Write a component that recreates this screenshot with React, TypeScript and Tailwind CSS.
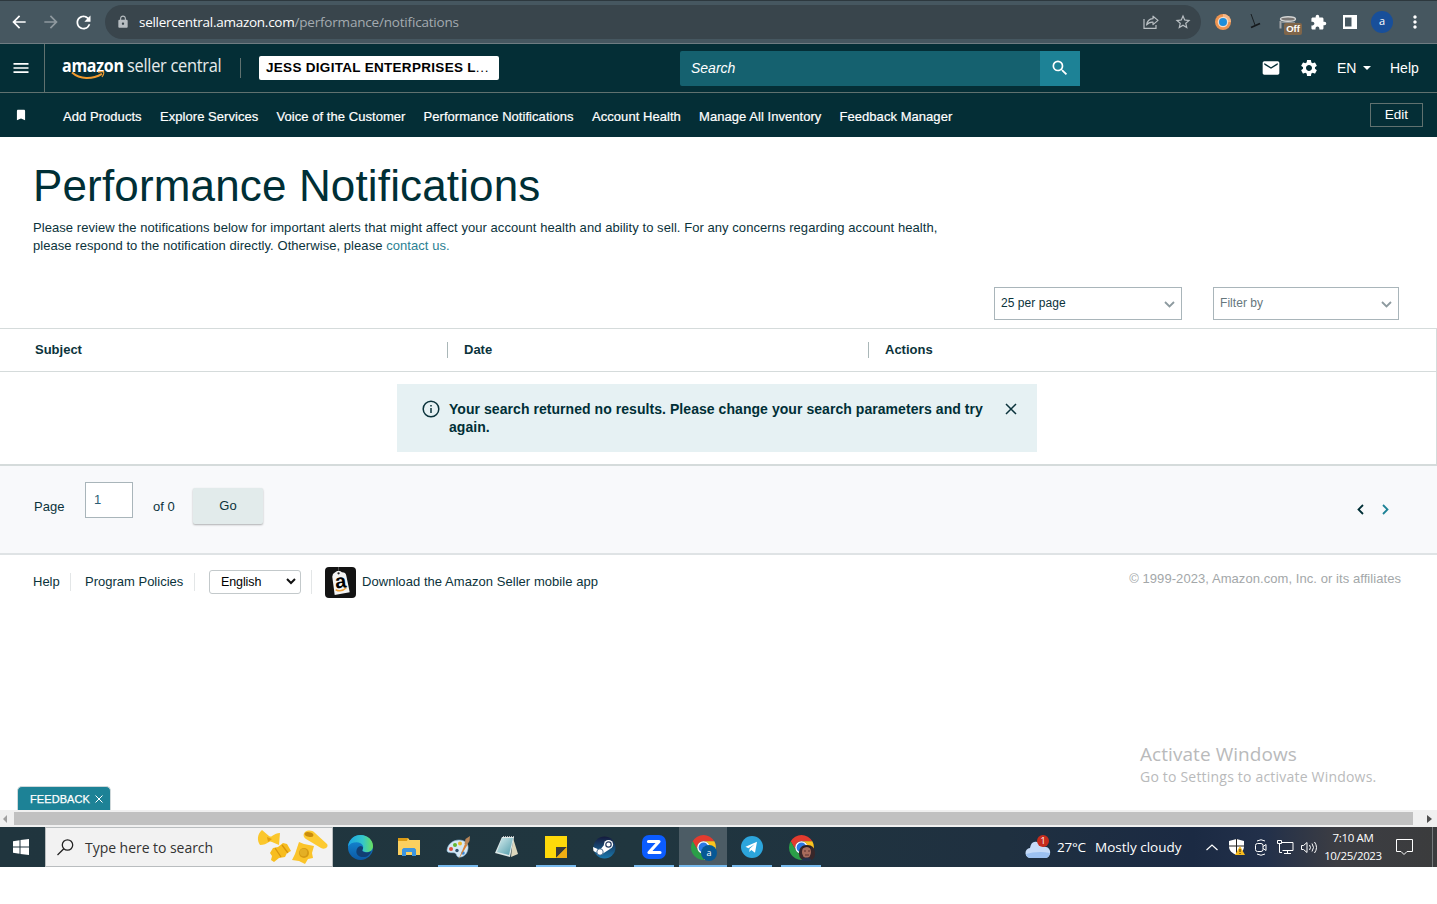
import type { ReactNode } from "react";
import {
  MdArrowBack, MdArrowForward, MdBookmark, MdExtension, MdLock, MdMail, MdMenu,
  MdMoreVert, MdRefresh, MdSearch, MdSettings, MdStarBorder,
} from "react-icons/md";

const ui = "font-['Open_Sans','Noto_Sans',sans-serif]";

function ShareIcon() {
  return (
    <svg width="16" height="16" viewBox="0 0 16 16" fill="none" stroke="#b9bfc3" strokeWidth="1.2">
      <path d="M1 5v9.4h12V11" />
      <path d="M10 2.2 15 6.4l-5 4.2V8.2C7 8 5 9 3.6 11 4 7.6 6 5 10 4.700z" strokeLinejoin="round" />
    </svg>
  );
}

function BrowserBar() {
  return (
    <div className="flex h-[44px] items-center border-b border-[#6f7c82] border-t border-t-[#2d383e] bg-[#465760] text-white">
      <MdArrowBack size={20} className="ml-[9px]" />
      <MdArrowForward size={20} className="ml-[12px] text-[#8f999f]" />
      <MdRefresh size={21} className="ml-[12px]" />
      <div className="ml-[11px] flex h-[34px] w-[1096px] items-center rounded-full bg-[#39454c]">
        <MdLock size={14} className="ml-[11px] text-[#b7bdc1]" />
        <span className={`ml-[9px] whitespace-nowrap text-[13.5px] tracking-[-0.19px] text-[#a4abb0] ${ui}`}>
          <span className="tracking-[-0.27px] text-white">sellercentral.amazon.com</span>/performance/notifications
        </span>
        <div className="ml-auto mr-[9px] flex items-center gap-[15px] text-[#b9bfc3]">
          <ShareIcon />
          <MdStarBorder size={18} />
        </div>
      </div>
      <svg className="ml-[14px]" width="16" height="16" viewBox="0 0 16 16">
        <circle cx="8" cy="8" r="8" fill="#ee9450" />
        <path d="M8 0a8 8 0 0 1 8 8h-8z" fill="#f6b684" />
        <circle cx="8" cy="8" r="5.300" fill="#f3dcc9" />
        <circle cx="8" cy="8" r="4" fill="#1d8edb" />
      </svg>
      <svg className="ml-[19px]" width="12" height="16" viewBox="0 0 12 16" stroke="#15191c">
        <path d="M1 0 5 11" strokeWidth="0.9" />
        <path d="M1 13.500 10 9.500" strokeWidth="1.800" />
      </svg>
      <div className="relative ml-[17px] h-[18px] w-[24px] pt-[3px]">
        <svg width="20" height="18" viewBox="0 0 20 18" fill="none">
          <path d="M1.500 5v7.500" stroke="#a4a7a8" strokeWidth="2" />
          <ellipse cx="9" cy="3" rx="7.500" ry="2.200" fill="#7a7775" stroke="#d5d6d5" strokeWidth="1.400" />
          <path d="M2 6.500h14" stroke="#8c9092" />
        </svg>
        <span className="absolute left-[5px] top-[10px] flex h-[12px] w-[18px] items-center justify-center rounded-[2px] bg-[#80664a] font-['Liberation_Sans',sans-serif] text-[9.5px] font-bold">Off</span>
      </div>
      <MdExtension size={17} className="ml-[7px]" />
      <svg className="ml-[16px]" width="14" height="14"><path d="M0 0h14v14H0zM2 2.500v9h6.500v-9z" fill="#fff" fillRule="evenodd" /></svg>
      <span className={`ml-[14px] flex h-[22px] w-[22px] items-center justify-center rounded-full bg-[#184f9a] pb-px text-[11px] ${ui}`}>a</span>
      <MdMoreVert size={20} className="ml-[12px]" />
    </div>
  );
}

function SellerHeader() {
  return (
    <header className="flex h-[49px] items-center border-b border-[#60716f] bg-[#042e36] text-[14px] text-white">
      <div className="flex h-full w-[45px] items-center border-r border-[#60716f] pl-[11px]">
        <MdMenu size={20} />
      </div>
      <div className={`relative ml-[17px] flex h-[28px] w-[161px] whitespace-nowrap text-[18px] leading-[22px] ${ui}`}>
        <span className="w-[65px]"><span className="inline-block origin-left scale-x-[0.89] font-bold tracking-[-0.3px]">amazon</span></span>
        <span className="inline-block origin-left scale-x-[0.91] tracking-[-0.3px] text-[#e6ebec]">seller central</span>
        <svg className="absolute left-[9px] top-[17px]" width="34" height="10" viewBox="0 0 34 10" fill="none" stroke="#f29a2e">
          <path d="M1 1.500C9 8.500 21 8.800 31 2.800" strokeWidth="2" />
          <path d="M27 1.200c3-.7 5-.5 5.500 0 .4.600-.2 3-1.500 4.800" strokeWidth="1.200" />
        </svg>
      </div>
      <div className="ml-[17px] h-[20px] w-px bg-[#60716f]" />
      <div className="ml-[18px] flex h-[24px] w-[240px] items-center whitespace-nowrap rounded-[2px] bg-white pl-[7px] text-[13.500px] font-bold tracking-[0.3px] text-black">
        JESS DIGITAL ENTERPRISES L<span className="font-normal tracking-[0.7px]">...</span>
      </div>
      <div className="ml-[181px] flex h-[35px] w-[360px] items-center rounded-l-[2px] bg-[#15616f] pl-[11px] italic">Search</div>
      <div className="flex h-[35px] w-[40px] items-center justify-center bg-[#1d8296]"><MdSearch size={20} /></div>
      <MdMail size={20} className="ml-[181px]" />
      <MdSettings size={20} className="ml-[18px]" />
      <span className="ml-[18px] w-[26px]">EN</span>
      <svg width="8" height="4"><path d="M0 0h8L4 4z" fill="#fff" /></svg>
      <span className="ml-[19px]">Help</span>
    </header>
  );
}

const links: [string, string][] = [
  ["Add Products", "w-[97px]"],
  ["Explore Services", "w-[116.500px]"],
  ["Voice of the Customer", "w-[147px]"],
  ["Performance Notifications", "w-[168.500px]"],
  ["Account Health", "w-[107px]"],
  ["Manage All Inventory", "w-[140.500px]"],
  ["Feedback Manager", "w-[120px]"],
];

function ShortcutBar() {
  return (
    <nav className="flex h-[44px] items-center bg-[#042e36] text-[13px] text-white">
      <MdBookmark size={14} className="ml-[14px] mr-[35px]" />
      {links.map(([label, w]) => (
        <span key={label} className={`${w} shrink-0 whitespace-nowrap pt-[3px] tracking-[0.05px] [-webkit-text-stroke:0.2px_white]`}>{label}</span>
      ))}
      <div className="ml-auto mr-[14px] flex h-[24px] w-[53px] items-center justify-center border border-[#60716f] text-[13.500px]">Edit</div>
    </nav>
  );
}

function Dropdown({ children, className }: { children: ReactNode; className: string }) {
  return (
    <div className={`flex h-[33px] items-center justify-between border border-[#a9b5ba] pl-[6px] pr-[6px] text-[12px] ${className}`}>
      <span className="pb-[2px] tracking-[0.05px]">{children}</span>
      <svg className="mt-[2px]" width="11" height="7" fill="none" stroke="#8d9a9f" strokeWidth="1.800"><path d="M1 1l4.500 4.500L10 1" /></svg>
    </div>
  );
}

function Notifications() {
  return (
    <main className="relative h-[673px] bg-white text-[13px] text-[#0b333b]">
      <h1 className="h-[82px] pl-[33px] pt-[22px] text-[44px] leading-[54px] tracking-[0.15px] text-[#002f36]">Performance Notifications</h1>
      <p className="h-[68px] whitespace-nowrap pl-[33px] leading-[18px] tracking-[0.058px]">
        Please review the notifications below for important alerts that might affect your account health and ability to sell. For any concerns regarding account health,
        <br />
        please respond to the notification directly. Otherwise, please <a className="text-[#2b7f93]">contact us.</a>
      </p>
      <div className="flex h-[41px] gap-[31px] pl-[994px]">
        <Dropdown className="w-[188px]">25 per page</Dropdown>
        <Dropdown className="w-[186px] text-[#66777d]">Filter by</Dropdown>
      </div>
      <div className="flex h-[44px] items-center border-y border-r border-[#d5dbdb] text-[13px] font-bold">
        <span className="w-[447px] pl-[35px]">Subject</span>
        <span className="h-[16px] w-[421px] border-l border-[#aab7b8] pl-[16px] leading-[16px]">Date</span>
        <span className="h-[16px] border-l border-[#aab7b8] pl-[16px] leading-[16px]">Actions</span>
      </div>
      <div className="h-[94px] border-b-2 border-r border-[#d5dbdb] pl-[397px] pt-[12px]">
        <div className="flex h-[68px] w-[640px] bg-[#e6f1f3] pl-[25px] pt-[16px]">
          <svg width="18" height="18" viewBox="0 0 18 18" fill="none" stroke="#0b333b" strokeWidth="1.500">
            <circle cx="9" cy="9" r="7.800" /><path d="M9 8v5M9 5v1.600" />
          </svg>
          <p className="ml-[9px] w-[556px] text-[14px] font-bold leading-[18px] tracking-[0.055px] text-[#002f36]">
            Your search returned no results. Please change your search parameters and try<br />again.
          </p>
          <svg className="mt-[3px]" width="12" height="12" stroke="#0b333b" strokeWidth="1.500"><path d="M1 1l10 10M11 1 1 11" /></svg>
        </div>
      </div>
      <div className="flex h-[89px] border-b-2 border-[#dfe3e5] bg-[#f8f9fb] pl-[34px]">
        <span className="w-[51px] pt-[31px]">Page</span>
        <div className="mt-[16px] h-[36px] w-[48px] border border-[#a9b5ba] bg-white pl-[8px] pt-[7px] text-[#2b5d75]">1</div>
        <span className="ml-[20px] w-[40px] pt-[31px]">of 0</span>
        <div className="mt-[22px] flex h-[36px] w-[70px] items-center justify-center rounded-[2px] bg-[#e2ebeb] shadow-[0_1px_2px_rgba(0,0,0,0.3)]">Go</div>
        <svg className="ml-auto mt-[38px]" width="7" height="11" fill="none" stroke="#002f36" strokeWidth="1.800"><path d="M6 1 1.500 5.500 6 10" /></svg>
        <svg className="ml-[18px] mr-[48px] mt-[38px]" width="7" height="11" fill="none" stroke="#1d8296" strokeWidth="1.800"><path d="M1 1l4.500 4.500L1 10" /></svg>
      </div>
      <footer className="flex h-[54px] items-center whitespace-nowrap pl-[33px]">
        <span className="w-[38px] border-r border-[#e3e6e7] leading-[18px]">Help</span>
        <span className="ml-[14px] w-[110px] border-r border-[#e3e6e7] leading-[18px]">Program Policies</span>
        <div className="ml-[14px] mb-px flex h-[24px] w-[92px] items-center justify-between rounded-[3px] border border-[#c3c9cb] pl-[11px] pr-[4px] text-[12.500px] text-black">
          <span className="pt-px tracking-[-0.1px]">English</span>
          <svg width="10" height="7" fill="none" stroke="#111" strokeWidth="2"><path d="M1 1l4 4 4-4" /></svg>
        </div>
        <div className="ml-[10px] h-[24px] w-px bg-[#e3e6e7]" />
        <div className="relative ml-[13px] mt-px flex h-[31px] w-[31px] shrink-0 items-center justify-center rounded-[4px] bg-[#131313]">
          <svg width="31" height="31" viewBox="0 0 31 32" className="absolute inset-0">
            <path d="M13.500 0v6" stroke="#555" />
            <path d="M7 10q0-3 3-4.500l2-1.500h3l2 1.500q4 0 4.500 3.500L25 26 9.500 29z" fill="#f4f4f4" />
            <circle cx="13.500" cy="6.500" r="1.200" fill="#222" />
            <path d="M10.500 23.500c4 2 8 1 11-2" fill="none" stroke="#f0a33a" strokeWidth="1.500" />
          </svg>
          <span className="relative -mt-[3px] -rotate-6 text-[20px] font-bold leading-none text-black">a</span>
        </div>
        <span className="ml-[6px] tracking-[0.05px]">Download the Amazon Seller mobile app</span>
        <span className="ml-auto mr-[36px] pb-[6px] text-[13px] tracking-[0.065px] text-[#a3a7a9]">© 1999-2023, Amazon.com, Inc. or its affiliates</span>
      </footer>
      <div className={`absolute left-[1140px] top-[604px] whitespace-nowrap text-[#b9babb] ${ui}`}>
        <div className="text-[19px] leading-[27px] tracking-[0.06px]">Activate Windows</div>
        <div className="text-[14px] leading-[18px] tracking-[0.2px]">Go to Settings to activate Windows.</div>
      </div>
      <div className="absolute bottom-0 left-[17px] flex h-[24px] w-[94px] items-center whitespace-nowrap rounded-t-[5px] border border-b-0 border-[#cfd8da] bg-[#1d8296] pl-[12px] text-[11px] tracking-[0.08px] text-white [-webkit-text-stroke:0.25px_white]">
        <span className="pt-px">FEEDBACK</span>
        <svg className="ml-[5px]" width="8" height="8" stroke="#fff"><path d="M.5.500l7 7M7.500.500l-7 7" /></svg>
      </div>
    </main>
  );
}

function ChromeLogo() {
  const sector = "M1.608 6A12 12 0 0 1 22.392 6H12A6 6 0 0 0 6.804 15Z";
  return (
    <svg width="25" height="25" viewBox="0 0 24 24">
      <path d={sector} fill="#e33b2e" />
      <path d={sector} fill="#fcc31e" transform="rotate(120 12 12)" />
      <path d={sector} fill="#2b9f48" transform="rotate(240 12 12)" />
      <circle cx="12" cy="12" r="6" fill="#fff" />
      <circle cx="12" cy="12" r="4.700" fill="#2b78e4" />
    </svg>
  );
}

function Slot({ children, bar = "", active = false }: { children: ReactNode; bar?: string; active?: boolean }) {
  return (
    <div className={`relative flex h-[40px] w-[48px] items-center justify-center ${active ? "bg-[#4c5c65]" : ""}`}>
      {children}
      {bar && <span className={`absolute bottom-0 h-[2px] bg-[#76b9ed] ${bar}`} />}
    </div>
  );
}

function TaskIcons() {
  return (
    <div className="ml-[3px] flex gap-px">
      <Slot>
        <svg width="25" height="25" viewBox="0 0 24 24">
          <defs>
            <linearGradient id="edgeTop" x1="0" x2="1"><stop stopColor="#1ba5e4" /><stop offset=".6" stopColor="#35c7c9" /><stop offset="1" stopColor="#6ae05c" /></linearGradient>
            <linearGradient id="edgeLow" x2="0" y2="1"><stop stopColor="#1590dc" /><stop offset="1" stopColor="#0c59a4" /></linearGradient>
          </defs>
          <circle cx="12" cy="12" r="12" fill="url(#edgeLow)" />
          <path d="M0 11C1 4 6 0 12 0c7 0 12 5 12 10.500 0 4-3 6-6 6-3.500 0-5-1.300-4-2.500C16 11 13 7 8.500 7 4.500 7 1.500 8.500 0 11z" fill="url(#edgeTop)" />
          <path d="M8 16c0-3 1.800-5.200 4.500-5.500C15 11.500 14.500 13 14 14c-1 1.500 1 3 4 2.700 2 0 3.500-.8 4.700-1.700C21 19 18.500 21 15.500 21.200 11 21.500 8 19 8 16z" fill="#123f73" />
        </svg>
      </Slot>
      <Slot>
        <svg width="22" height="20" viewBox="0 0 22 20">
          <path d="M0 1h10l1.500 2H22v15H0z" fill="#fbd05f" /><path d="M0 1h10l-1 3H0z" fill="#dc9c14" />
          <path d="M4 19v-6.500L5.500 11h11l1.500 1.500V19h-4v-4H8v4z" fill="#3d95df" />
        </svg>
      </Slot>
      <Slot bar="w-[40px]">
        <svg width="25" height="25" viewBox="0 0 25 25">
          <path d="M1 15C2 8 8 5 13 5c6 0 10 4 9 9-1 6-6 9-10 8-2-1-1-3-3-4-3-1-8 1-8-3z" fill="#d5e8f5" stroke="#87b4d3" strokeWidth=".6" />
          <circle cx="5" cy="14" r="2" fill="#e04f3c" /><circle cx="9" cy="10" r="2" fill="#63b530" /><circle cx="14" cy="8.500" r="2" fill="#ecb72c" /><circle cx="11" cy="15.500" r="1.700" fill="#31516d" /><circle cx="17" cy="18" r="1.800" fill="#3a89d8" />
          <path d="M12.500 24.500 19 9l2.500.8z" fill="#d88237" /><path d="m18.500 9 1-5L24 1l-.5 5L21 10z" fill="#b98659" />
        </svg>
      </Slot>
      <Slot>
        <svg width="24" height="24" viewBox="0 0 24 24">
          <defs><linearGradient id="pad" x2="1" y2="1"><stop stopColor="#d7edee" /><stop offset="1" stopColor="#4f9baa" /></linearGradient></defs>
          <path d="m18 3 5 16-7 3z" fill="#ddd7bd" /><path d="M7 2h12l-4 20L0 18z" fill="#dce8e8" />
          <path d="M7 3h11l-4 17L2 17z" fill="url(#pad)" /><path d="M8 2h11" stroke="#e7e7e7" strokeWidth="1.500" strokeDasharray="1 1" />
        </svg>
      </Slot>
      <Slot bar="w-[40px]">
        <svg width="22" height="22" viewBox="0 0 22 22"><path d="M0 0h22v22H0z" fill="#ffd90a" /><path d="M11 22V11h11z" fill="#3a3a3a" /><path d="M11 22 22 11v11z" fill="#f1ae13" /></svg>
      </Slot>
      <Slot>
        <svg className="mr-[2px]" width="23" height="23" viewBox="0 0 23 23">
          <defs><linearGradient id="steam" x2="0" y2="1"><stop stopColor="#151a3c" /><stop offset="1" stopColor="#1a78ad" /></linearGradient></defs>
          <circle cx="11.500" cy="11.500" r="11" fill="url(#steam)" />
          <path d="m0 11 7 3 4-5 6 4-7 4.500-3 1L.5 15z" fill="#fff" /><circle cx="15.500" cy="8.500" r="4.600" fill="#fff" />
          <circle cx="15.500" cy="8.500" r="2.700" fill="#fff" stroke="#233a61" strokeWidth="1.200" /><circle cx="7" cy="16" r="3.200" fill="#fff" stroke="#274f78" strokeWidth=".8" />
        </svg>
      </Slot>
      <Slot bar="w-[40px]">
        <svg width="24" height="24" viewBox="0 0 24 24"><rect width="24" height="24" rx="7" fill="#0b5cff" /><path d="M6.500 6.500h10.500L7 17.500h11" fill="none" stroke="#fff" strokeWidth="3.200" strokeLinejoin="round" strokeLinecap="round" /></svg>
      </Slot>
      <Slot active bar="w-[48px]">
        <ChromeLogo />
        <span className={`absolute left-[22px] top-[18px] flex h-[16px] w-[16px] items-center justify-center rounded-full bg-[#075895] pb-px text-[9px] text-white ${ui}`}>a</span>
      </Slot>
      <Slot bar="w-[40px]">
        <svg width="22" height="22" viewBox="0 0 22 22"><circle cx="11" cy="11" r="11" fill="#2ca5dc" /><path d="m4.500 10.700 11.500-5-2 11-3.700-2.600-2 1.800.3-3.200 5-4.400-6.200 3.900z" fill="#fff" /></svg>
      </Slot>
      <Slot bar="w-[40px]">
        <ChromeLogo />
        <svg className="absolute left-[22px] top-[18px]" width="16" height="16" viewBox="0 0 16 16">
          <rect width="16" height="16" rx="7" fill="#38272a" /><ellipse cx="7.500" cy="7" rx="4.500" ry="6" fill="#a86c5c" />
          <path d="M3.500 3.500c3-2 6-2 8.500 0V1H3.500z" fill="#292024" /><path d="M5 6h2m2 0h2M6 10h4" stroke="#5b3030" /><path d="M3 14q5-3 9 0v2H3z" fill="#23314c" />
        </svg>
      </Slot>
    </div>
  );
}

function PastaArt() {
  return (
    <svg className="ml-auto mr-[3px]" width="72" height="38" viewBox="0 0 72 38">
      <path d="m5 2 7 6q2 1 3 0c3-2 5-3 8-3l-1 12-7-3q-2-1-3 0c-3 2-5 3-9 3C0 13 0 6 5 2z" fill="#fbc72c" />
      <path d="m10 9 5 2-4 3z" fill="#e4a010" />
      <path d="m13 25 3-5 5-1 5-4 4 1 4 7-4 2-2 4-6 1-5 4-3-2 1-4z" fill="#f7bd1f" /><path d="m18 20 6 9M25 17l6 8" stroke="#d8950e" strokeWidth="1.300" />
      <path d="M48 4c3-2 7-2 10 1l12 11c2 3-2 6-6 4L49 11c-3-2-3-5-1-7z" fill="#fcca31" /><ellipse cx="52" cy="6.500" rx="4.500" ry="2.300" transform="rotate(12 52 6.500)" fill="#c98c0b" />
      <path d="m42 14 5 2 10 2-2 7 1 5-5 1-3 5-6-3-7-1 3-6z" fill="#fbc42a" /><circle cx="47" cy="25" r="5" fill="#d69b14" /><circle cx="46.500" cy="24.500" r="3.700" fill="#e4af25" />
    </svg>
  );
}

function Taskbar() {
  return (
    <div className={`flex h-[40px] items-center bg-[linear-gradient(90deg,#20353e_0%,#20363f_45%,#1f3040_70%,#1b2a43_83%,#22304a_88%,#3c3d43_93%,#3b3c3d_100%)] text-white ${ui}`}>
      <svg className="ml-[13px]" width="16" height="16" viewBox="0 0 16 16" fill="#fff"><path d="M0 2.200 6.500 1.300v6.200H0zM7.500 1.100 16 0v7.500H7.500zM0 8.500h6.500v6.200L0 13.800zM7.500 8.500H16V16l-8.500-1.100z" /></svg>
      <div className="ml-[16px] flex h-[40px] w-[288px] items-center border border-[#b9bdbf] bg-[#f2f2f2] text-[14px] text-[#333]">
        <svg className="ml-[11px]" width="17" height="17" fill="none" stroke="#222" strokeWidth="1.300"><circle cx="10.500" cy="6" r="5.200" /><path d="M6.800 9.800.500 16" /></svg>
        <span className="ml-[11px] whitespace-nowrap tracking-[-0.04px]">Type here to search</span>
        <PastaArt />
      </div>
      <TaskIcons />
      <div className="ml-auto flex h-full items-center whitespace-nowrap text-[13.500px]">
        <div className="relative h-[24px] w-[26px]">
          <svg width="26" height="24" viewBox="0 0 26 24"><path d="M6 23a5 5 0 0 1-1-10C6 8 8 6 12 7c3 0 5 2 6 5 5-1 8 3 7 7-1 3-3 4-5 4z" fill="#c6dbf8" /><path d="M6 23a5 5 0 0 1-5-4c7-2 15-3 24-1-1 3-2 5-5 5z" fill="#9cc1f1" /></svg>
          <span className="absolute left-[12px] top-0 flex h-[12px] w-[12px] items-center justify-center rounded-full bg-[#c72c1c] text-[9px]">1</span>
        </div>
        <span className="ml-[6px] w-[38px] tracking-[-0.2px]">27°C</span>
        <span className="w-[111px] tracking-[0px]">Mostly cloudy</span>
        <svg width="12" height="7" fill="none" stroke="#fff" strokeWidth="1.200"><path d="M.500 6 6 1l5.500 5" /></svg>
        <svg className="ml-[11px]" width="16" height="17" viewBox="0 0 16 17">
          <path d="M7.500 0 15 2v5c0 5-3 7-7.500 9C3 14 0 12 0 7V2z" fill="#fff" /><path d="M7.500 0v16M0 7h15" stroke="#222" /><path d="m11 7 5 9H6z" fill="#f8bb1d" /><path d="M11 10v3m0 1v1" stroke="#222" />
        </svg>
        <svg className="ml-[10px]" width="12" height="17" fill="none" stroke="#fff"><rect x=".5" y="4.500" width="7.500" height="8" rx="2" /><path d="m8 7.500 3-2v6l-3-2M2 2q4-2.500 8 0M2 15q4 2.500 8 0" /></svg>
        <svg className="ml-[10px]" width="17" height="15" fill="none" stroke="#fff"><path d="M5 2.500h11v8H5.500M10.500 10.500v3M7 13.500h7M.500.500h4v3h-4zM2.500 3.500v9H5" /></svg>
        <svg className="ml-[7px]" width="17" height="15" fill="none" stroke="#fff"><path d="M.500 5.500h2l3.500-3v10l-3.500-3h-2zM8.500 5q2 2.500 0 5M11 3.500q3 4 0 8M13.500 2q4 5.500 0 11" /></svg>
        <div className="ml-[5px] w-[60px] text-center text-[11.500px] leading-[18px] tracking-[-0.33px] [&>div]:-mx-1"><div>7:10 AM</div><div>10/25/2023</div></div>
        <svg className="ml-[13px]" width="17" height="17" fill="none" stroke="#fff"><path d="M.500.500h16v12H11l-3 3-3-3H.500z" /></svg>
        <div className="ml-[19px] mr-[4px] h-full w-px bg-[#777a7c]" />
      </div>
    </div>
  );
}

export default function App() {
  return (
    <div className="h-[904px] w-[1437px] overflow-hidden bg-white font-['Liberation_Sans',Arial,sans-serif]">
      <BrowserBar />
      <SellerHeader />
      <ShortcutBar />
      <Notifications />
      <div className="flex h-[17px] items-center bg-[#f0f0f0] pl-[3px]">
        <svg width="4" height="8"><path d="M4 0v8L0 4z" fill="#a0a0a0" /></svg>
        <div className="ml-[7px] h-[13px] w-[1399px] bg-[#c1c1c1]" />
        <svg className="ml-[14px]" width="5" height="8"><path d="M0 0v8l5-4z" fill="#505050" /></svg>
      </div>
      <Taskbar />
    </div>
  );
}
